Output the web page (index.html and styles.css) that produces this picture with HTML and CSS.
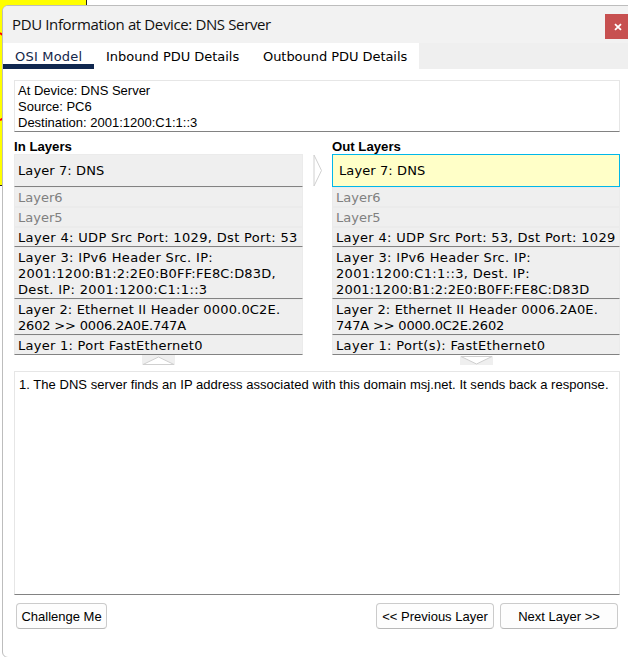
FILE: index.html
```html
<!DOCTYPE html>
<html lang="en">
<head>
<meta charset="utf-8">
<title>PDU Information</title>
<link rel="stylesheet" href="styles.css">
</head>
<body>
<div class="workspace">
  <svg width="88" height="190" viewBox="0 0 88 190">
    <rect width="86" height="185" fill="#ffff00"/>
    <path d="M86.5 0V185.5H0" fill="none" stroke="#222"/>
    <path d="M0 33l4 3M0 120l4-2" stroke="#f00" stroke-width="2"/>
  </svg>
</div>
<div class="window">
  <header class="titlebar">
    <h1 class="title">PDU Information at Device: DNS Server</h1>
    <button class="close" aria-label="Close"><svg width="8" height="8" viewBox="0 0 8 8"><path d="M1 1.2L7 6.8M7 1.2L1 6.8" stroke="#fff" stroke-width="1.8"/></svg></button>
  </header>
  <nav class="tabs">
    <span class="tab active">OSI Model</span>
    <span class="tab inbound">Inbound PDU Details</span>
    <span class="tab outbound">Outbound PDU Details</span>
  </nav>
  <main class="content">
    <div class="box info">At Device: DNS Server<br>Source: PC6<br>Destination: 2001:1200:C1:1::3</div>
    <div class="layers">
      <section class="column">
        <h2>In Layers</h2>
        <div class="layer top">Layer 7: DNS</div>
        <div class="layer off">Layer6</div>
        <div class="layer off">Layer5</div>
        <div class="layer wide">Layer 4: UDP Src Port: 1029, Dst Port: 53</div>
        <div class="layer wide">Layer 3: IPv6 Header Src. IP:<br><span class="medium">2001:1200:B1:2:2E0:B0FF:FE8C:D83D,</span><br>Dest. IP: 2001:1200:C1:1::3</div>
        <div class="layer medium">Layer 2: Ethernet II Header 0000.0C2E.<br><span class="narrow">2602 &gt;&gt; 0006.2A0E.747A</span></div>
        <div class="layer port">Layer 1: Port FastEthernet0</div>
        <svg class="arrow" width="33" height="10" viewBox="0 0 33 10"><rect width="33" height="10" fill="#efefef"/><path d="M1 9.5L16.500 2L32 9.500Z" fill="#fff" stroke="#d0d0d0"/></svg>
      </section>
      <svg class="across" width="29" height="33" viewBox="0 0 29 33"><path d="M11 1V32L18.500 16.500Z" fill="#fff" stroke="#d0d0d0"/></svg>
      <section class="column out">
        <h2>Out Layers</h2>
        <div class="layer top selected">Layer 7: DNS</div>
        <div class="layer off">Layer6</div>
        <div class="layer off">Layer5</div>
        <div class="layer wide">Layer 4: UDP Src Port: 53, Dst Port: 1029</div>
        <div class="layer wide">Layer 3: IPv6 Header Src. IP:<br>2001:1200:C1:1::3, Dest. IP:<br><span class="medium">2001:1200:B1:2:2E0:B0FF:FE8C:D83D</span></div>
        <div class="layer medium">Layer 2: Ethernet II Header 0006.2A0E.<br><span class="narrow">747A &gt;&gt; 0000.0C2E.2602</span></div>
        <div class="layer wide">Layer 1: Port(s): FastEthernet0</div>
        <svg class="arrow" width="33" height="10" viewBox="0 0 33 10"><rect y="1" width="33" height="9" fill="#efefef"/><path d="M1 1.500L16.500 9L32 1.500Z" fill="#fff" stroke="#d0d0d0"/></svg>
      </section>
    </div>
    <div class="box details">1. The DNS server finds an IP address associated with this domain msj.net. It sends back a response.</div>
    <footer class="actions">
      <button class="btn challenge">Challenge Me</button>
      <button class="btn previous">&lt;&lt; Previous Layer</button>
      <button class="btn next">Next Layer &gt;&gt;</button>
    </footer>
  </main>
</div>
</body>
</html>
```
FILE: styles.css
```css
* { box-sizing: border-box; }
html, body { margin: 0; height: 657px; overflow: hidden; background: #fff; }
body { padding: 5px 0 0 2px; color: #000; font-family: "Liberation Sans", Arial, sans-serif; font-size: 13px; }
.workspace { position: absolute; left: 0; top: 0; }
.workspace svg { display: block; }
.window { position: relative; height: 653px; width: 634px; background: #fff; border: 1px solid #bdbdbd; border-radius: 6px; overflow: hidden; }
.titlebar { display: flex; align-items: flex-start; height: 37px; background: #f2f2f2; }
.title { margin: 0; padding-left: 9px; width: 602px; font: 400 15px/37px "Open Sans", "Noto Sans", sans-serif; letter-spacing: -0.37px; color: #111; white-space: nowrap; }
.close { display: flex; align-items: center; justify-content: center; margin-top: 8px; padding: 0; width: 25px; height: 25px; border: 0; background: #c75050; }
.tabs { display: flex; height: 26px; background: #efefef; font: 13px/27px "DejaVu Sans", Verdana, sans-serif; white-space: nowrap; }
.tab { background: #fff; padding-left: 12px; }
.tab.active { width: 91px; letter-spacing: 0.2px; color: #14264a; border-bottom: 5px solid #10274f; }
.tab.inbound { width: 157px; letter-spacing: -0.03px; }
.tab.outbound { width: 168px; letter-spacing: -0.05px; }
.content { padding: 11px 0 0 11px; width: 617px; }
.box { border: 1px solid #e6e6e6; border-bottom-color: #828282; line-height: 16px; white-space: nowrap; }
.info { height: 52px; padding: 2px 3px; }
.layers { display: flex; height: 239px; }
.column { width: 289px; }
.column.out { width: 288px; }
.column h2 { margin: 0; height: 22px; padding-top: 7px; font-size: 13.2px; line-height: 16px; }
.layer { background: #efefef; border: 1px solid #ebebeb; border-bottom-color: #828282; padding: 2px 3px 0; font: 13px/16px "DejaVu Sans", Verdana, sans-serif; white-space: nowrap; }
.layer.top { height: 33px; padding-top: 1px; line-height: 29px; letter-spacing: 0.1px; }
.layer.off { color: #808080; border-bottom-color: #ebebeb; }
.layer.selected { background: #ffffc8; border-color: #00b7ea; padding-left: 6px; }
.wide { letter-spacing: 0.34px; }
.medium { letter-spacing: 0.17px; }
.port { letter-spacing: 0.27px; }
.narrow { letter-spacing: -0.18px; }
.arrow { display: block; margin: 0 auto; }
.across { margin-top: 22px; }
.details { height: 224px; padding: 5px 4px; letter-spacing: 0.04px; }
.actions { display: flex; padding: 8px 2px 0; }
.btn { height: 26px; padding: 0; border: 1px solid #cbcbcb; border-bottom-color: #b8b8b8; border-radius: 4px; background: #fdfdfd; color: #000; font: inherit; white-space: nowrap; }
.challenge { width: 91px; margin-right: auto; }
.previous { width: 118px; margin-right: 6px; }
.next { width: 118px; }
```
